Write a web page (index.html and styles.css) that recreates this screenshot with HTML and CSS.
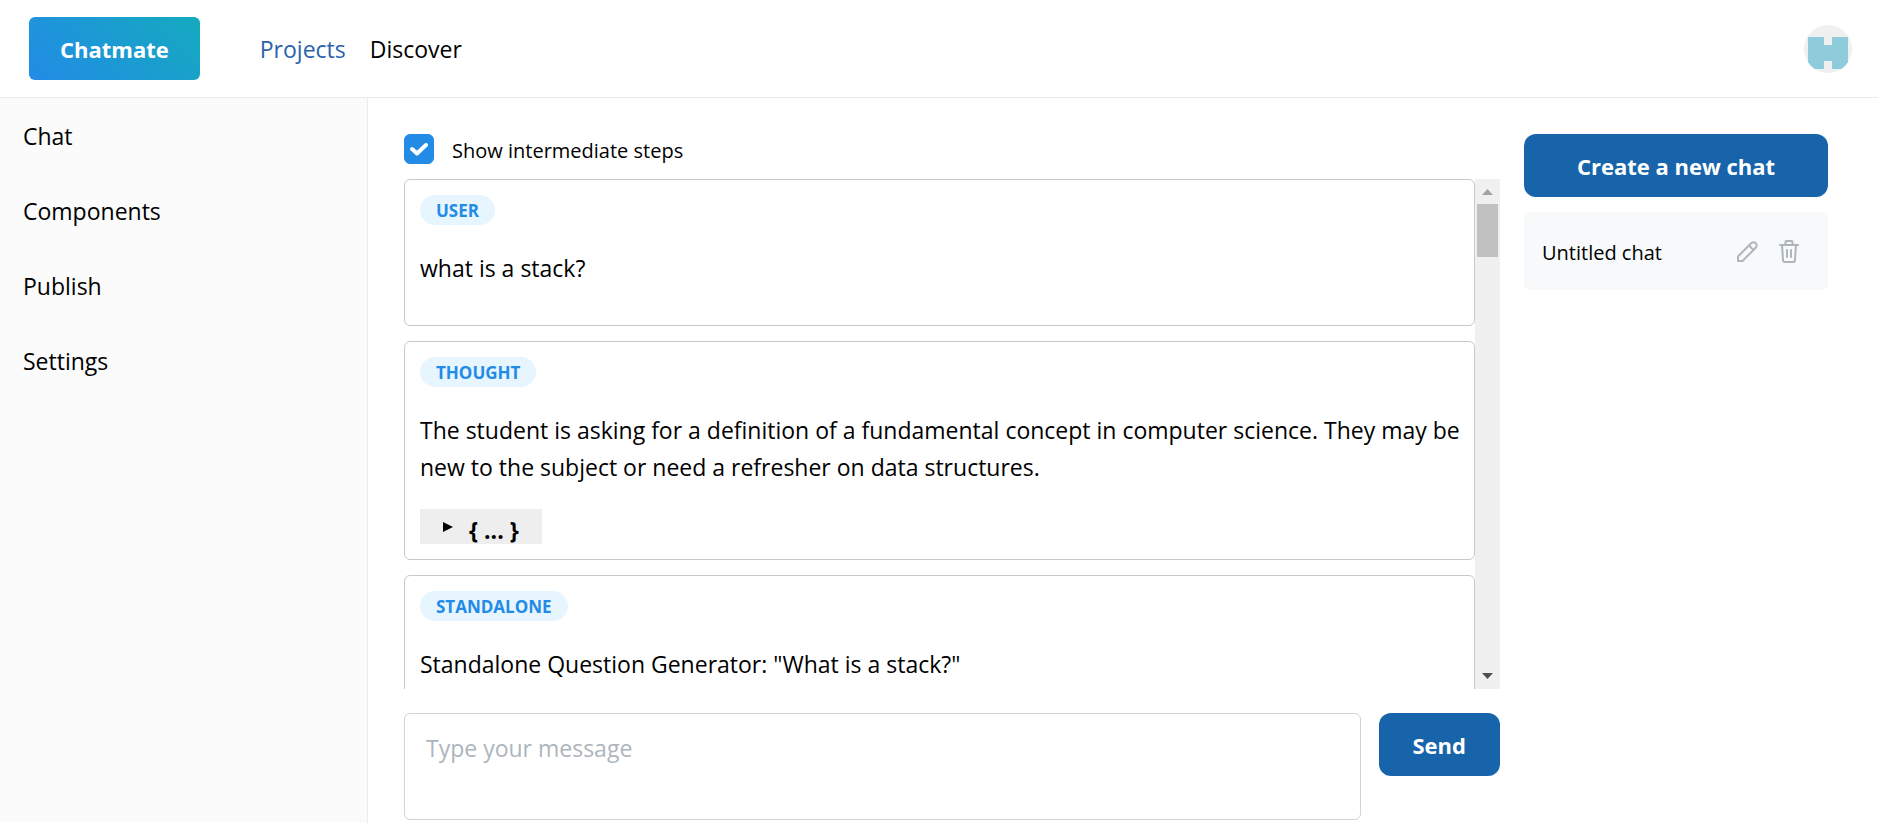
FILE: index.html
```html
<!DOCTYPE html>
<html lang="en">
<head>
    <meta charset="UTF-8">
    <meta name="viewport" content="width=device-width, initial-scale=1.0">
    <title>Chatmate</title>
    <link rel="stylesheet" href="styles.css">
</head>
<body>
    <header class="header">
        <a href="#" class="logo">Chatmate</a>
        <nav class="top-nav">
            <a href="#" class="active">Projects</a>
            <a href="#">Discover</a>
        </nav>
        <a href="#" class="avatar" aria-label="Account">
            <svg width="48" height="48" viewBox="0 0 48 48">
                <defs>
                    <clipPath id="circle"><circle cx="24" cy="24" r="24"/></clipPath>
                </defs>
                <g clip-path="url(#circle)">
                    <rect width="48" height="48" fill="#f0f0f0"/>
                    <path fill="#8fccdb" d="M4 12h16v8h8v-8h16v32H28v-8h-8v8H4z"/>
                </g>
            </svg>
        </a>
    </header>

    <div class="layout">
        <nav class="sidebar">
            <a href="#">Chat</a>
            <a href="#">Components</a>
            <a href="#">Publish</a>
            <a href="#">Settings</a>
        </nav>

        <main class="content">
            <section class="chat">
                <label class="steps" for="showSteps">
                    <input type="checkbox" id="showSteps" checked>
                    <svg class="tick" width="18" height="13" viewBox="0 0 18 13" fill="none" stroke="#fff" stroke-width="4" stroke-linecap="round" stroke-linejoin="round">
                        <path d="M2 6l5 4.500 9-8.500"/>
                    </svg>
                    <span>Show intermediate steps</span>
                </label>

                <div class="messages">
                    <div class="message-list">
                        <article class="message">
                            <span class="badge">USER</span>
                            <p>what is a stack?</p>
                        </article>
                        <article class="message">
                            <span class="badge">THOUGHT</span>
                            <p>The student is asking for a definition of a fundamental concept in computer science. They may be new to the subject or need a refresher on data structures.</p>
                            <button type="button" class="json-toggle" aria-label="Expand">
                                <svg width="10" height="12" viewBox="0 0 10 12"><path d="M0 1l10 5-10 5z"/></svg>
                                <span>{ ... }</span>
                            </button>
                        </article>
                        <article class="message">
                            <span class="badge">STANDALONE</span>
                            <p>Standalone Question Generator: "What is a stack?"</p>
                        </article>
                    </div>
                    <div class="scrollbar" aria-hidden="true">
                        <svg width="25" height="25" viewBox="0 0 25 25"><path fill="#a3a3a3" d="M7 16h11l-5.500-6z"/></svg>
                        <div class="thumb"></div>
                        <svg class="down" width="25" height="25" viewBox="0 0 25 25"><path fill="#505050" d="M7 9h11l-5.500 6z"/></svg>
                    </div>
                </div>

                <form class="composer">
                    <textarea id="message" aria-label="Message" placeholder="Type your message"></textarea>
                    <button type="button" class="btn">Send</button>
                </form>
            </section>

            <aside class="chats">
                <button type="button" class="btn">Create a new chat</button>
                <div class="chat-item">
                    <a href="#">Untitled chat</a>
                    <button type="button" class="icon-btn" aria-label="Rename chat">
                        <svg width="24" height="24" viewBox="0 0 24 24" fill="none" stroke="#adb5bd" stroke-width="2" stroke-linecap="round" stroke-linejoin="round">
                            <path d="M3 21v-4.500L16.200 3.300a2.650 2.650 0 0 1 4.500 4.500L7.500 21z"/>
                            <path d="M14 5.500l4.500 4.500"/>
                        </svg>
                    </button>
                    <button type="button" class="icon-btn" aria-label="Delete chat">
                        <svg width="24" height="24" viewBox="0 0 24 24" fill="none" stroke="#adb5bd" stroke-width="2" stroke-linecap="round" stroke-linejoin="round">
                            <path d="M3 5h18"/>
                            <path d="M5 5l1 15a2 2 0 0 0 2 2h8a2 2 0 0 0 2-2l1-15"/>
                            <path d="M8.500 5V2a1 1 0 0 1 1-1h5a1 1 0 0 1 1 1v3"/>
                            <path d="M10 10v7M14 10v7"/>
                        </svg>
                    </button>
                </div>
            </aside>
        </main>
    </div>
</body>
</html>
```
FILE: styles.css
```css
* {
    margin: 0;
    padding: 0;
    box-sizing: border-box;
}

body {
    font-family: 'Segoe UI', 'Open Sans', sans-serif;
    font-size: 23px;
    line-height: 37px;
    color: #000;
    background: #fff;
    min-height: 100vh;
    display: flex;
    flex-direction: column;
}

a {
    color: inherit;
    text-decoration: none;
}

button,
textarea {
    font: inherit;
}

button {
    border: none;
    cursor: pointer;
}

.header {
    display: flex;
    align-items: center;
    height: 98px;
    padding: 0 26px 0 29px;
    border-bottom: 1px solid #e9ecef;
}

.logo {
    padding: 14px 31px 12px;
    border-radius: 6px;
    background: linear-gradient(45deg, #228be6, #15aabf);
    color: #fff;
    font-size: 22px;
    font-weight: 700;
}

.top-nav {
    display: flex;
    gap: 24px;
    margin-left: 60px;
    padding-top: 2px;
}

.top-nav .active {
    color: #2b62ad;
}

.avatar {
    display: flex;
    margin-left: auto;
    padding-top: 1px;
}

.layout {
    flex: 1;
    display: flex;
}

.sidebar {
    width: 368px;
    padding: 1px 23px;
    border-right: 1px solid #e9ecef;
    background: #fbfbfb;
}

.sidebar a {
    display: block;
    padding: 19px 0;
}

.content {
    flex: 1;
    display: flex;
    gap: 24px;
    min-width: 0;
    padding: 36px 50px 0 36px;
}

.chat {
    flex: 1;
    min-width: 0;
}

.steps {
    display: flex;
    align-items: center;
    gap: 18px;
    position: relative;
    height: 30px;
    font-size: 20px;
}

.steps span {
    padding-top: 2px;
}

.steps input {
    appearance: none;
    width: 30px;
    height: 30px;
    border: 1px solid #228be6;
    border-radius: 6px;
    background: #228be6;
}

.tick {
    position: absolute;
    left: 6px;
    top: 9px;
}

.messages {
    display: flex;
    height: calc(100vh - 313px);
    margin: 15px 0 24px;
}

.message-list {
    flex: 1;
    display: flex;
    flex-direction: column;
    gap: 15px;
    min-width: 0;
    overflow-y: auto;
    scrollbar-width: none;
}

.scrollbar {
    display: flex;
    flex-direction: column;
    width: 25px;
    background: #f0f0f0;
}

.scrollbar .thumb {
    height: 53px;
    margin: 0 2px;
    background: #c1c1c1;
}

.scrollbar .down {
    margin-top: auto;
}

.message {
    flex: none;
    padding: 15px 10px 15px 15px;
    border: 1px solid #c8c8c8;
    border-radius: 6px;
}

.badge {
    display: block;
    width: fit-content;
    padding: 1px 16px 0;
    border-radius: 15px;
    background: #e7f5ff;
    color: #228be6;
    font-size: 17px;
    font-weight: 700;
    line-height: 29px;
}

.message p {
    margin: 25px 0 23px;
}

.json-toggle {
    display: flex;
    align-items: center;
    gap: 16px;
    height: 35px;
    padding: 1px 23px 0;
    background: #eee;
    font-weight: 700;
}

.json-toggle span {
    padding-top: 6px;
}

.composer {
    display: flex;
    align-items: flex-start;
    gap: 18px;
}

.composer textarea {
    flex: 1;
    height: 107px;
    padding: 16px 21px;
    border: 1px solid #ced4da;
    border-radius: 6px;
    resize: none;
}

.composer textarea::placeholder {
    color: #adb5bd;
}

.btn {
    height: 63px;
    padding: 2px 34px 0;
    border-radius: 12px;
    background: #1864ab;
    color: #fff;
    font-size: 22px;
    font-weight: 700;
}

.chats {
    display: flex;
    flex-direction: column;
    gap: 15px;
    width: 304px;
}

.chat-item {
    display: flex;
    align-items: center;
    gap: 18px;
    height: 78px;
    padding: 2px 27px 0 18px;
    border-radius: 6px;
    background: #f8f9fa;
    font-size: 20px;
}

.chat-item a {
    flex: 1;
}

.icon-btn {
    display: flex;
    background: none;
}
```
